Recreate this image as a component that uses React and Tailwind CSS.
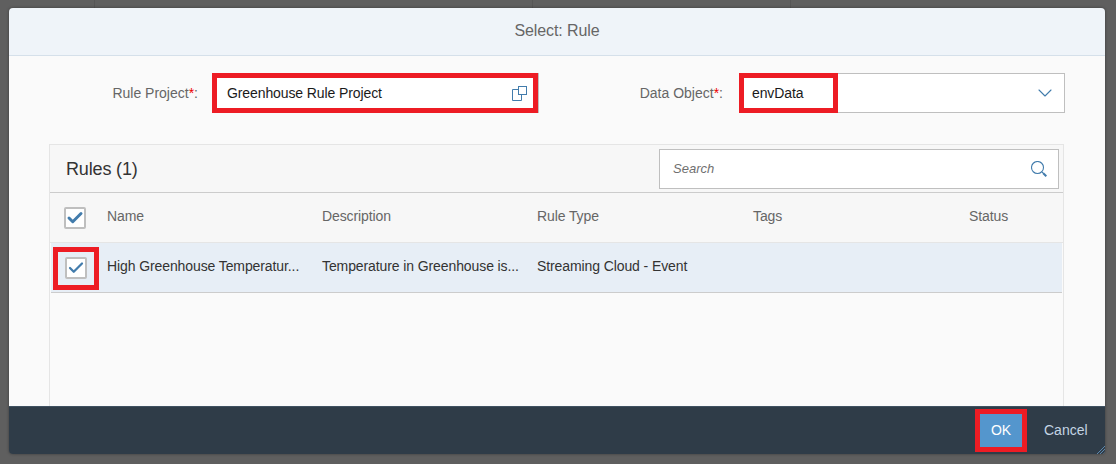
import React from 'react';
import { Check, ChevronDown } from 'lucide-react';

const RedBox = ({ className }) => (
  <div className={`pointer-events-none absolute border-[5px] border-[#ed1c24] ${className}`} />
);

const CheckBox = ({ thick }) => (
  <div className="flex h-[22px] w-[22px] items-center justify-center rounded-[2px] border-2 border-[#bfbfbf] bg-white">
    <Check size={18} strokeWidth={thick ? 4 : 3} className="text-[#427cac]" />
  </div>
);

const CopyIcon = () => (
  <svg width="15" height="15" viewBox="0 0 15 15" fill="none" stroke="#427cac" strokeWidth="1">
    <rect x="6.5" y="0.5" width="8" height="8" />
    <path d="M6.5 3.5H0.5V14.5H9.5V8.5" />
  </svg>
);

const SearchIcon = () => (
  <svg width="16" height="16" viewBox="0 0 16 16" fill="none" stroke="#427cac">
    <circle cx="6.5" cy="6.5" r="6" strokeWidth="1.1" />
    <path d="M10.7 10.7L12 12" strokeWidth="1" />
    <path d="M12 12L15.3 15.3" strokeWidth="2" />
  </svg>
);

const columns = ['Name', 'Description', 'Rule Type', 'Tags', 'Status'];

export default function App() {
  return (
    <div className="relative h-[464px] w-[1116px] overflow-hidden bg-[#5f5f5f] pl-[9px] pt-2 font-['Liberation_Sans',sans-serif] text-[14px] tracking-[-0.1px]">
      {/* page behind the dialog */}
      <div className="absolute left-[94px] top-0 h-2 w-px bg-[#565656]" />
      <div className="absolute left-[532px] top-0 h-2 w-px bg-[#565656]" />
      <div className="absolute left-[790px] top-0 h-2 w-px bg-[#565656]" />

      <div className="relative flex h-[446px] w-[1096px] flex-col overflow-hidden rounded-[4px] shadow-[0_0_3px_rgba(0,0,0,0.4)]">
        <div className="flex h-[48px] shrink-0 items-center justify-center border-b border-[#d5e0ea] bg-[#eff4f9] pb-px text-[16px] text-[#666666]">
          Select: Rule
        </div>

        <div className="flex min-h-0 flex-1 flex-col bg-[#fafafa]">
          <div className="flex pt-[17px]">
            <div className="flex h-10 w-[189px] items-center justify-end pt-px tracking-normal text-[#666666]">
              Rule Project<span className="text-[#e00]">*</span>:
            </div>
            <div className="relative ml-[14px] flex h-10 w-[327px] items-center justify-between border-r border-[#bfbfbf] bg-white pl-[15px] pr-[11px] text-[#1a1a1a]">
              <span>Greenhouse Rule Project</span>
              <CopyIcon />
              <RedBox className="inset-0" />
            </div>
            <div className="flex h-10 w-[184px] items-center justify-end pt-px tracking-normal text-[#666666]">
              Data Object<span className="text-[#e00]">*</span>:
            </div>
            <div className="relative ml-[18px] flex h-10 w-[324px] items-center justify-between border border-[#bfbfbf] bg-white pl-[10px] pr-[7px] text-[#1a1a1a]">
              <span>envData</span>
              <ChevronDown size={24} strokeWidth={1.1} className="text-[#427cac]" />
              <RedBox className="-inset-y-px -left-[3px] w-[99px]" />
            </div>
          </div>

          <div className="ml-[40px] mt-[31px] flex min-h-0 w-[1015px] flex-1 flex-col border-x border-t border-[#e5e5e5]">
            <div className="flex h-[48px] shrink-0 items-start justify-between border-b border-[#cccccc] bg-[#f7f7f7] pl-4 pr-1 pt-1">
              <div className="pt-[7px] text-[18px] tracking-[-0.15px] text-[#333333]">Rules (1)</div>
              <div className="flex h-10 w-[400px] items-center justify-between border border-[#bfbfbf] bg-white pl-[13px] pr-[11px]">
                <span className="text-[13px] italic tracking-normal text-[#707070]">Search</span>
                <SearchIcon />
              </div>
            </div>

            <div className="grid h-[50px] shrink-0 grid-cols-[57px_215px_215px_216px_216px_1fr] items-center border-b border-[#e5e5e5] bg-[#f7f7f7] pb-0.5 text-[#666666]">
              <div className="pl-[14px] pt-0.5"><CheckBox thick /></div>
              {columns.map((col) => (
                <div key={col}>{col}</div>
              ))}
            </div>

            <div className="mx-px grid h-[50px] shrink-0 grid-cols-[56px_215px_215px_216px_1fr] items-center border-b border-[#cccccc] bg-[#e7eef6] text-[#333333]">
              <div className="relative flex h-full items-center pl-[14px]">
                <CheckBox />
                <RedBox className="left-[2px] top-1 h-[43px] w-[46px]" />
              </div>
              <div className="pb-0.5">High Greenhouse Temperatur...</div>
              <div className="pb-0.5">Temperature in Greenhouse is...</div>
              <div className="pb-0.5">Streaming Cloud - Event</div>
              <div />
            </div>
          </div>
        </div>

        <div className="relative flex h-[48px] shrink-0 items-center justify-end border-t border-[#3f5161] bg-[#2f3c48] pr-[18px] text-[14px]">
          <div className="relative mr-[22px] flex h-[33px] w-[42px] items-center justify-center bg-[#5496cd] tracking-normal text-white">
            OK
            <RedBox className="-inset-[5px]" />
          </div>
          <div className="w-[43px] whitespace-nowrap tracking-normal text-[#c4d5e4]">Cancel</div>
          <svg className="absolute bottom-0 right-0" width="8" height="8" viewBox="0 0 8 8" stroke="#5b87ad" strokeWidth="1">
            <path d="M0 8L8 0M3 8L8 3M6 8L8 6" />
          </svg>
        </div>
      </div>
    </div>
  );
}
